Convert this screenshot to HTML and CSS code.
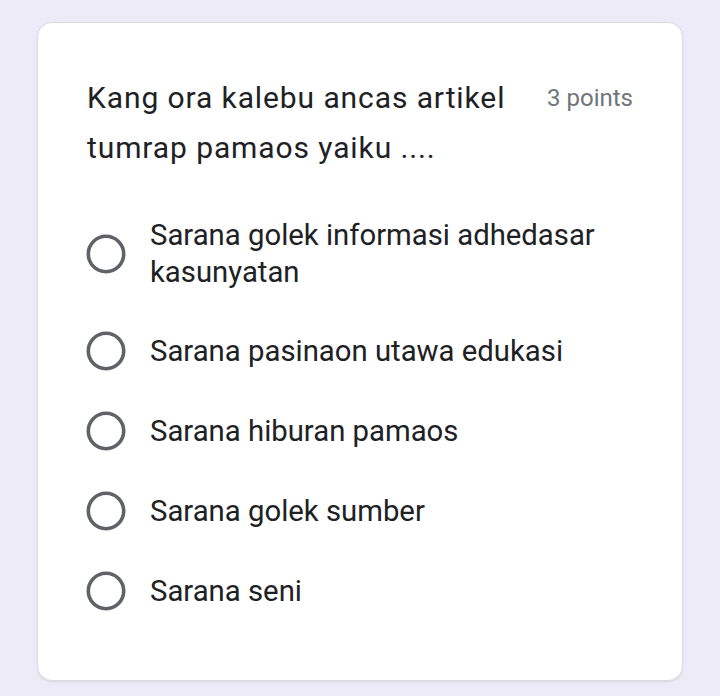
FILE: index.html
```html
<!DOCTYPE html>
<html>
<head>
<meta charset="utf-8">
<link rel="stylesheet" href="styles.css">
</head>
<body>
<div class="card">
  <div class="header">
    <div class="title">Kang ora kalebu ancas artikel tumrap pamaos yaiku ....</div>
    <div class="points">3 points</div>
  </div>
  <div class="options">
    <div class="option">
      <svg class="radio" width="40" height="40" viewBox="0 0 40 40"><circle cx="20" cy="20" r="17.7" fill="none" stroke="#5f6368" stroke-width="3.6"/></svg>
      <div class="label">Sarana golek informasi adhedasar kasunyatan</div>
    </div>
    <div class="option">
      <svg class="radio" width="40" height="40" viewBox="0 0 40 40"><circle cx="20" cy="20" r="17.7" fill="none" stroke="#5f6368" stroke-width="3.6"/></svg>
      <div class="label">Sarana pasinaon utawa edukasi</div>
    </div>
    <div class="option">
      <svg class="radio" width="40" height="40" viewBox="0 0 40 40"><circle cx="20" cy="20" r="17.7" fill="none" stroke="#5f6368" stroke-width="3.6"/></svg>
      <div class="label">Sarana hiburan pamaos</div>
    </div>
    <div class="option">
      <svg class="radio" width="40" height="40" viewBox="0 0 40 40"><circle cx="20" cy="20" r="17.7" fill="none" stroke="#5f6368" stroke-width="3.6"/></svg>
      <div class="label">Sarana golek sumber</div>
    </div>
    <div class="option">
      <svg class="radio" width="40" height="40" viewBox="0 0 40 40"><circle cx="20" cy="20" r="17.7" fill="none" stroke="#5f6368" stroke-width="3.6"/></svg>
      <div class="label">Sarana seni</div>
    </div>
  </div>
</div>
</body>
</html>
```
FILE: styles.css
```css
html, body {
  margin: 0;
  padding: 0;
}
body {
  background: #edebf7;
  font-family: Roboto, "Noto Sans", sans-serif;
  width: 720px;
  height: 696px;
  padding: 22px 0 0 37px;
  box-sizing: border-box;
}
.card {
  width: 646px;
  height: 659px;
  box-sizing: border-box;
  background: #ffffff;
  border: 1px solid #dcdbe4;
  border-radius: 15px;
  box-shadow: 0 1px 2px rgba(60, 64, 67, 0.12);
  padding: 50px 49px 0 49px;
}
.header {
  display: flex;
  justify-content: space-between;
  align-items: flex-start;
}
.title {
  width: 440px;
  font-size: 30px;
  letter-spacing: 0.9px;
  line-height: 50px;
  color: #202124;
}
.points {
  font-size: 24px;
  line-height: 50px;
  color: #70757a;
  white-space: nowrap;
}
.options {
  margin-top: 44px;
  display: flex;
  flex-direction: column;
  gap: 40px;
}
.option {
  display: flex;
  align-items: center;
  gap: 24px;
}
.radio {
  flex: none;
  margin-left: -1px;
}
.label {
  font-size: 29.3px;
  line-height: 37px;
  color: #202124;
}
```
